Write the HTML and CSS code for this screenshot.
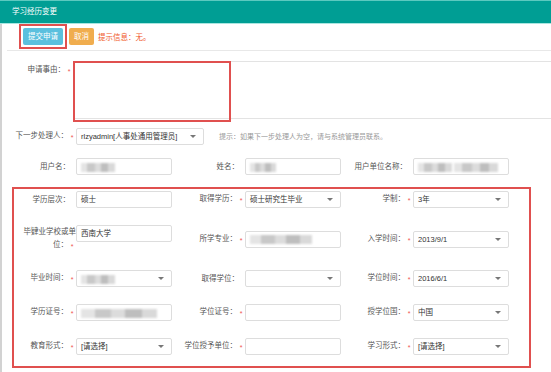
FILE: index.html
```html
<!DOCTYPE html>
<html lang="zh-CN">
  <head>
    <meta charset="UTF-8" />
    <meta name="viewport" content="width=device-width, initial-scale=1.0" />
    <title>学习经历变更</title>
    <link rel="stylesheet" href="styles.css">
  </head>
  <body>
    <div class="dialog">
      <div class="dialog-title">学习经历变更</div>
      <div class="dialog-body">
        <div class="toolbar">
          <span class="mark"><button class="btn btn-submit">提交申请</button></span>
          <button class="btn btn-cancel">取消</button>
          <span class="tip">提示信息：无。</span>
        </div>

        <div class="reason-row">
          <div class="label reason-label">申请事由：<span class="star">*</span></div>
          <div class="reason-field">
            <textarea class="reason-text"></textarea>
          </div>
        </div>

        <div class="grid top-grid">
          <div class="label">下一步处理人：<span class="star">*</span></div>
          <div class="next-cell">
            <div class="field select next-select">rlzyadmin[人事处通用管理员]</div>
            <span class="hint">提示：如果下一步处理人为空，请与系统管理员联系。</span>
          </div>

          <div class="label nostar">用户名：</div>
          <div class="field"><span class="blur blur-s"></span></div>
          <div class="label nostar">姓名：</div>
          <div class="field"><span class="blur blur-a"></span></div>
          <div class="label nostar">用户单位名称：</div>
          <div class="field"><span class="blur blur-s"></span> <span class="blur blur-x"></span></div>
        </div>

        <!-- 学历信息 -->
        <div class="edu">
          <div class="grid edu-grid">
            <div class="label nostar">学历层次：</div>
            <div class="field">硕士</div>
            <div class="label">取得学历：<span class="star">*</span></div>
            <div class="field select">硕士研究生毕业</div>
            <div class="label">学制：<span class="star">*</span></div>
            <div class="field select">3年</div>

            <div class="label">毕肄业学校或单<br>位：<span class="star">*</span></div>
            <div class="field field-top">西南大学</div>
            <div class="label">所学专业：<span class="star">*</span></div>
            <div class="field"><span class="blur blur-m"></span></div>
            <div class="label">入学时间：<span class="star">*</span></div>
            <div class="field select">2013/9/1</div>

            <div class="label">毕业时间：<span class="star">*</span></div>
            <div class="field select"><span class="blur blur-s"></span></div>
            <div class="label nostar">取得学位：</div>
            <div class="field select"></div>
            <div class="label">学位时间：<span class="star">*</span></div>
            <div class="field select">2016/6/1</div>

            <div class="label">学历证号：<span class="star">*</span></div>
            <div class="field"><span class="blur blur-l"></span></div>
            <div class="label">学位证号：<span class="star">*</span></div>
            <div class="field"></div>
            <div class="label">授学位国：<span class="star">*</span></div>
            <div class="field select">中国</div>

            <div class="label">教育形式：<span class="star">*</span></div>
            <div class="field select">[请选择]</div>
            <div class="label">学位授予单位：<span class="star">*</span></div>
            <div class="field"></div>
            <div class="label">学习形式：<span class="star">*</span></div>
            <div class="field select">[请选择]</div>
          </div>
        </div>
      </div>
    </div>
  </body>
</html>
```

FILE: styles.css
```css
html,
body {
  margin: 0;
}
body {
  font-family: "Liberation Sans", "Noto Sans CJK SC", sans-serif;
  font-size: 7.5px;
  color: #555;
  background: #fff;
  overflow: hidden;
}

.dialog-title {
  height: 22px;
  line-height: 22px;
  padding-left: 12px;
  background: #009e94;
  border-top: 1px solid #5cc9bf;
  border-bottom: 1px solid #a9e6e0;
  color: #fff;
}
.dialog-body {
  min-height: 348px;
  box-shadow: inset 2px 0 0 #d2d2d2;
}

/* toolbar */
.toolbar {
  display: flex;
  align-items: center;
  margin-left: 7px;
  padding: 0 0 1px 12px;
  border-bottom: 1px solid #e8e8e8;
}
.mark {
  display: flex;
  padding: 2px;
  border: 2px solid #e0504f;
}
.btn {
  height: 17px;
  padding: 0;
  border: 0;
  border-radius: 2px;
  color: #fff;
  font: inherit;
  line-height: 17px;
}
.btn-submit {
  width: 40px;
  background: #5bc0de;
}
.btn-cancel {
  width: 25px;
  margin-left: 2px;
  background: #f0ad4e;
}
.tip {
  margin-left: 4px;
  color: #f05a2a;
}

/* 申请事由 */
.reason-row {
  display: flex;
  margin-top: 10px;
}
.reason-label {
  width: 73px;
  padding-top: 2px;
  box-sizing: border-box;
}
.reason-field {
  position: relative;
  flex: 1;
}
.reason-text {
  display: block;
  width: 100%;
  height: 58px;
  margin: 0;
  padding: 0;
  box-sizing: border-box;
  border: 1px solid #e3e3e3;
  border-right: 0;
  resize: none;
}
.reason-field::after {
  content: "";
  position: absolute;
  left: 0;
  top: 0;
  width: 158px;
  height: 61px;
  box-sizing: border-box;
  border: 2px solid #e0504f;
}

/* form grid */
.grid {
  display: grid;
  grid-template-columns: 62px 96px 73px 96px 72px 96px;
  align-items: center;
}
.label {
  text-align: right;
  line-height: 13px;
  white-space: nowrap;
}
.label.nostar {
  padding-right: 6px;
}
.star {
  display: inline-block;
  width: 8px;
  text-align: center;
  color: #f0524f;
  font-size: 7px;
  vertical-align: -2px;
}

.top-grid {
  margin: 8px 0 0 14px;
  grid-template-rows: 18px 17px;
  row-gap: 13px;
}
.next-cell {
  grid-column: 2 / 7;
  display: flex;
  align-items: center;
}
.next-select {
  width: 128px;
  height: 18px;
  line-height: 16px;
}
.hint {
  margin-left: 15px;
  color: #999;
  font-size: 7px;
}

.edu {
  width: 519px;
  margin: 12px 0 0 12px;
  padding: 2px 0 11px;
  box-sizing: border-box;
  border: 2px solid #e0504f;
}
.edu-grid {
  row-gap: 17px;
}

.field {
  position: relative;
  height: 17px;
  box-sizing: border-box;
  padding-left: 4px;
  border: 1px solid #ddd;
  border-radius: 2px;
  background: #fff;
  color: #333;
  line-height: 15px;
  white-space: nowrap;
  overflow: hidden;
}
.field-top {
  align-self: start;
}
.select::after {
  content: "";
  position: absolute;
  right: 7px;
  top: 6px;
  border: 3px solid transparent;
  border-top-color: #777;
  border-bottom-width: 0;
}

/* masked personal data */
.blur {
  display: inline-block;
  height: 9px;
  vertical-align: middle;
  filter: blur(1px);
  background: linear-gradient(90deg, #e4e4e4 0 18%, #c8c8c8 18% 40%, #dcdcdc 40% 58%, #bebebe 58% 80%, #d9d9d9 80%);
}
.blur-s { width: 34px; }
.blur-a { width: 26px; }
.blur-m { width: 62px; }
.blur-l { width: 76px; }
.blur-x { width: 44px; }
```
